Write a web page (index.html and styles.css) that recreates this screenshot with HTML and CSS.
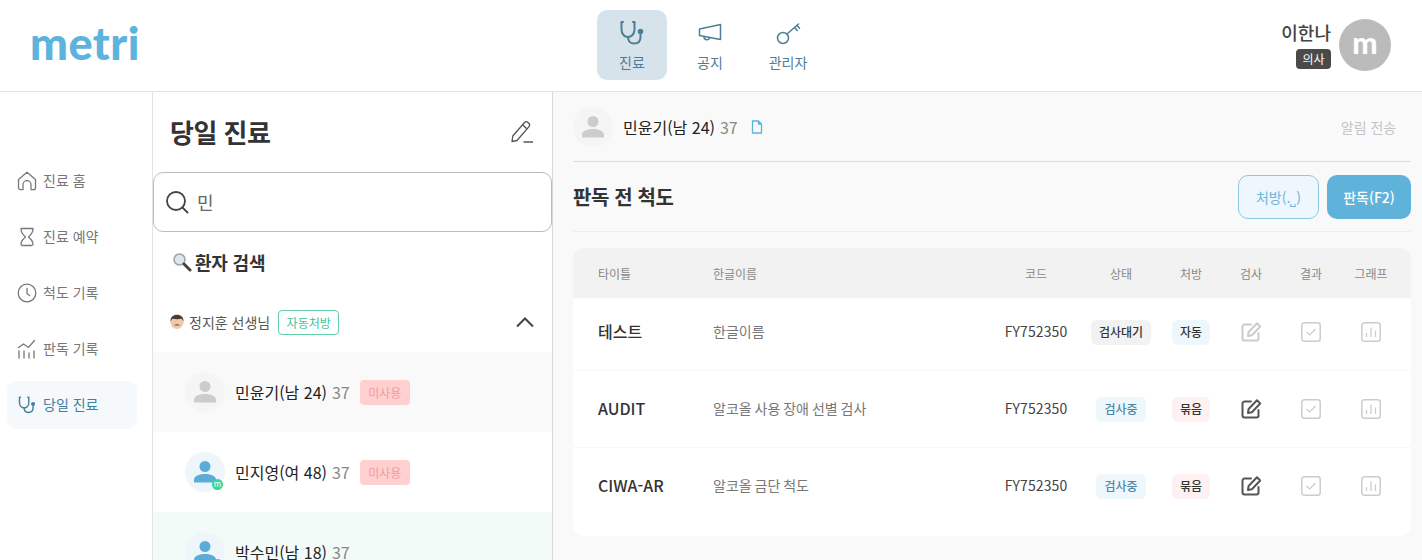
FILE: index.html
```html
<!DOCTYPE html>
<html lang="ko">
<head>
  <meta charset="UTF-8" />
  <meta name="viewport" content="width=device-width, initial-scale=1.0" />
  <title>metri</title>
  <link rel="stylesheet" href="styles.css">
</head>
<body>
  <svg class="defs" width="0" height="0" aria-hidden="true">
    <symbol id="i-steth" viewBox="0 0 28 28">
      <path d="M5 3H3.500v7.500c0 4.600 3 7.500 6.500 7.500s6.500-2.900 6.500-7.500V3H15" fill="none" stroke="currentColor" stroke-width="2" stroke-linecap="round" stroke-linejoin="round"/>
      <path d="M10 18c0 4 2.500 6.500 6 6.500 4 0 6.500-2.500 6.500-6.500v-2.500" fill="none" stroke="currentColor" stroke-width="2" stroke-linecap="round"/>
      <circle cx="22.500" cy="12.500" r="2.800" fill="currentColor"/>
    </symbol>
    <symbol id="i-edit" viewBox="0 0 22 22">
      <path d="M11 3.500H4.500a2 2 0 0 0-2 2v12a2 2 0 0 0 2 2h12a2 2 0 0 0 2-2V12" fill="none" stroke="currentColor" stroke-width="2" stroke-linecap="round"/>
      <path d="M8 15l.6-4L17 2.200l3.200 3.300-8.300 8.800z" fill="none" stroke="currentColor" stroke-width="2" stroke-linejoin="round"/>
    </symbol>
    <symbol id="i-check" viewBox="0 0 22 22">
      <rect x="1.800" y="1.800" width="18.400" height="18.400" rx="2.500" fill="none" stroke="currentColor" stroke-width="1.500"/>
      <path d="M6.500 11l3.200 3 5.800-6" fill="none" stroke="currentColor" stroke-width="1.200"/>
    </symbol>
    <symbol id="i-graph" viewBox="0 0 22 22">
      <rect x="1.800" y="1.800" width="18.400" height="18.400" rx="2.500" fill="none" stroke="currentColor" stroke-width="1.500"/>
      <path d="M6.500 16v-4M11 16V6.500M15.500 16V9.500" fill="none" stroke="currentColor" stroke-width="1.300"/>
    </symbol>
    <symbol id="i-person" viewBox="0 0 24 24">
      <circle cx="12" cy="6.500" r="5.500" fill="currentColor"/>
      <path d="M1 22.500v-2.500c0-3.500 4-6 11-6s11 2.500 11 6v2.500z" fill="currentColor"/>
    </symbol>
  </svg>

  <header class="topbar">
    <div class="logo">metri</div>
    <nav class="topnav">
      <a class="topnav-item active">
        <svg class="topnav-icon" width="28" height="28"><use href="#i-steth"/></svg>
        <span>진료</span>
      </a>
      <a class="topnav-item">
        <svg class="topnav-icon" width="28" height="28" viewBox="0 0 28 28" fill="none" stroke="currentColor" stroke-width="1.500" stroke-linejoin="round">
          <path d="M24.500 5.500v15L3.500 16.500v-6.500z"/>
          <path d="M8 17.500a3 3 0 0 0 5.800 1.300"/>
        </svg>
        <span>공지</span>
      </a>
      <a class="topnav-item">
        <svg class="topnav-icon" width="28" height="28" viewBox="0 0 28 28" fill="none" stroke="currentColor" stroke-width="1.500" stroke-linecap="round">
          <circle cx="9" cy="19" r="5.500"/>
          <path d="M13 15L24.500 5M20.500 8.500l2.800 3M23 6.500l2.500 2.800"/>
        </svg>
        <span>관리자</span>
      </a>
    </nav>
    <div class="user">
      <div class="user-text">
        <div class="user-name">이한나</div>
        <div class="user-role">의사</div>
      </div>
      <div class="user-avatar">m</div>
    </div>
  </header>

  <div class="page">
    <aside class="sidebar">
      <a class="side-item">
        <svg width="20" height="20" viewBox="0 0 20 20" fill="none" stroke="currentColor" stroke-width="1.300" stroke-linejoin="round">
          <path d="M1.500 8.500L10 1.300l8.500 7.200v8.200a2 2 0 0 1-2 2H14v-5a4 4 0 0 0-8 0v5H3.500a2 2 0 0 1-2-2z"/>
        </svg>
        <span>진료 홈</span>
      </a>
      <a class="side-item">
        <svg width="20" height="20" viewBox="0 0 20 20" fill="none" stroke="currentColor" stroke-width="1.300" stroke-linejoin="round">
          <path d="M4 1.500h12c0 3-1.500 6-4.500 8.500 3 2.500 4.500 5 4.500 7a1.500 1.500 0 0 1-1.500 1.500h-9A1.500 1.500 0 0 1 4 17c0-2 1.500-4.500 4.500-7C5.500 7.500 4 4.500 4 1.500z"/>
        </svg>
        <span>진료 예약</span>
      </a>
      <a class="side-item">
        <svg width="20" height="20" viewBox="0 0 20 20" fill="none" stroke="currentColor" stroke-width="1.300" stroke-linecap="round">
          <circle cx="10" cy="10" r="8.800"/>
          <path d="M10 5.500v5l2.500 2"/>
        </svg>
        <span>척도 기록</span>
      </a>
      <a class="side-item">
        <svg width="20" height="20" viewBox="0 0 20 20" fill="none" stroke="currentColor" stroke-width="1.300" stroke-linecap="round">
          <path d="M2 19v-7M7 19v-7M12 19v-5M17 19v-7"/>
          <path d="M1.500 8.500L6.500 5l5 3.500 6-7"/>
        </svg>
        <span>판독 기록</span>
      </a>
      <a class="side-item active">
        <svg width="20" height="20"><use href="#i-steth"/></svg>
        <span>당일 진료</span>
      </a>
    </aside>

    <section class="panel">
      <div class="panel-head">
        <h2 class="panel-title">당일 진료</h2>
        <svg width="24" height="24" viewBox="0 0 24 24" fill="none" stroke="#555" stroke-width="1.300" stroke-linejoin="round">
          <path d="M2 21.500l.8-5.500L14.500 2.500a2.500 2.500 0 0 1 3.500 0l.8.800a2.500 2.500 0 0 1 0 3.500L7 20.500z"/>
          <path d="M12.500 4.800l4.500 4.200M13.500 22h9.500"/>
        </svg>
      </div>
      <div class="search-box">
        <svg width="24" height="24" viewBox="0 0 24 24" fill="none" stroke="#444" stroke-width="1.800" stroke-linecap="round">
          <circle cx="11" cy="11" r="9"/>
          <path d="M17.500 17.500l5 5"/>
        </svg>
        <span class="search-text">민</span>
      </div>
      <div class="search-title">
        <svg width="20" height="20" viewBox="0 0 20 20">
          <circle cx="7.500" cy="7.500" r="5.500" fill="#dfe6ea" stroke="#9aa4aa" stroke-width="1.500"/>
          <path d="M12 12l6 6" stroke="#444" stroke-width="3" stroke-linecap="round"/>
        </svg>
        <span>환자 검색</span>
      </div>
      <div class="group-head">
        <svg width="16" height="16" viewBox="0 0 16 16">
          <circle cx="8" cy="8.500" r="6.500" fill="#f2c9a8"/>
          <path d="M1.500 8C1 3 4.500 .8 8 .8S15 3 14.500 8c-.5-2-1.500-3-2.500-3.200-2 .5-6 .5-8 0C3 5 2 6 1.500 8z" fill="#4a3a32"/>
          <path d="M5 11c1.500-1 4.500-1 6 0-1 .8-5 .8-6 0z" fill="#6a5040"/>
        </svg>
        <span class="group-name">정지훈 선생님</span>
        <span class="group-badge">자동처방</span>
        <svg class="chevron" width="20" height="12" viewBox="0 0 20 12" fill="none" stroke="#444" stroke-width="2">
          <path d="M2 10.500l8-8 8 8"/>
        </svg>
      </div>
      <div class="patient selected">
        <div class="patient-avatar off"><svg width="24" height="24"><use href="#i-person"/></svg></div>
        <span class="patient-name">민윤기(남 24)</span>
        <span class="patient-num">37</span>
        <span class="unused">미사용</span>
      </div>
      <div class="patient">
        <div class="patient-avatar"><svg width="24" height="24"><use href="#i-person"/></svg><i class="online">m</i></div>
        <span class="patient-name">민지영(여 48)</span>
        <span class="patient-num">37</span>
        <span class="unused">미사용</span>
      </div>
      <div class="patient done">
        <div class="patient-avatar"><svg width="24" height="24"><use href="#i-person"/></svg><i class="online">m</i></div>
        <span class="patient-name">박수민(남 18)</span>
        <span class="patient-num">37</span>
      </div>
    </section>

    <main class="main">
      <div class="main-top">
        <div class="patient-avatar off"><svg width="24" height="24"><use href="#i-person"/></svg></div>
        <span class="patient-name">민윤기(남 24)</span>
        <span class="patient-num">37</span>
        <svg class="doc-icon" width="14" height="14" viewBox="0 0 14 14" fill="none" stroke="#5cb3dc" stroke-width="1.300" stroke-linejoin="round">
          <path d="M2.500 1h6l3 3v9h-9zM8.500 1v3h3"/>
        </svg>
        <button type="button" class="notify">알림 전송</button>
      </div>
      <div class="main-head">
        <h3 class="main-title">판독 전 척도</h3>
        <div class="main-actions">
          <button type="button" class="btn btn-line">처방(.⎵)</button>
          <button type="button" class="btn btn-fill">판독(F2)</button>
        </div>
      </div>

      <div class="table">
        <div class="row row-head">
          <div>타이틀</div>
          <div>한글이름</div>
          <div class="center">코드</div>
          <div class="center">상태</div>
          <div class="center">처방</div>
          <div class="center">검사</div>
          <div class="center">결과</div>
          <div class="center">그래프</div>
        </div>
        <div class="row first">
          <div class="cell-title">테스트</div>
          <div class="cell-name">한글이름</div>
          <div class="center cell-code">FY752350</div>
          <div class="center"><span class="tag tag-wait">검사대기</span></div>
          <div class="center"><span class="tag tag-auto">자동</span></div>
          <div class="center light"><svg width="22" height="22"><use href="#i-edit"/></svg></div>
          <div class="center light"><svg width="22" height="22"><use href="#i-check"/></svg></div>
          <div class="center light"><svg width="22" height="22"><use href="#i-graph"/></svg></div>
        </div>
        <div class="row">
          <div class="cell-title">AUDIT</div>
          <div class="cell-name">알코올 사용 장애 선별 검사</div>
          <div class="center cell-code">FY752350</div>
          <div class="center"><span class="tag tag-ing">검사중</span></div>
          <div class="center"><span class="tag tag-bundle">묶음</span></div>
          <div class="center dark"><svg width="22" height="22"><use href="#i-edit"/></svg></div>
          <div class="center light"><svg width="22" height="22"><use href="#i-check"/></svg></div>
          <div class="center light"><svg width="22" height="22"><use href="#i-graph"/></svg></div>
        </div>
        <div class="row last">
          <div class="cell-title">CIWA-AR</div>
          <div class="cell-name">알코올 금단 척도</div>
          <div class="center cell-code">FY752350</div>
          <div class="center"><span class="tag tag-ing">검사중</span></div>
          <div class="center"><span class="tag tag-bundle">묶음</span></div>
          <div class="center dark"><svg width="22" height="22"><use href="#i-edit"/></svg></div>
          <div class="center light"><svg width="22" height="22"><use href="#i-check"/></svg></div>
          <div class="center light"><svg width="22" height="22"><use href="#i-graph"/></svg></div>
        </div>
      </div>
    </main>
  </div>
</body>
</html>
```

FILE: styles.css
```css
* {
  box-sizing: border-box;
}

html, body {
  height: 100%;
}

body {
  margin: 0;
  overflow: hidden;
  display: flex;
  flex-direction: column;
  font-family: "Noto Sans CJK KR", "Noto Sans", sans-serif;
  color: #333;
  background: #fff;
}

.defs {
  position: absolute;
}

h2, h3 {
  margin: 0;
}

/* top bar */
.topbar {
  flex: none;
  height: 92px;
  padding: 0 31px 1px 29px;
  display: grid;
  grid-template-columns: 1fr auto 1fr;
  align-items: center;
  border-bottom: 1px solid #e4e4e4;
}

.logo {
  font-family: Lato, sans-serif;
  font-weight: 900;
  font-size: 45px;
  line-height: 1;
  letter-spacing: 0.5px;
  color: #5cb3dc;
  margin: -4px 0 0 1px;
}

.topnav {
  display: flex;
  gap: 8px;
}

.topnav-item {
  width: 70px;
  height: 70px;
  border-radius: 10px;
  display: flex;
  flex-direction: column;
  align-items: center;
  padding-top: 9px;
  font-size: 14px;
  line-height: 20px;
  color: #4f7d96;
}

.topnav-item.active {
  background: #d7e3ea;
}

.topnav-icon {
  margin-bottom: 5px;
}

.user {
  display: flex;
  justify-content: flex-end;
  align-items: center;
  gap: 8px;
}

.user-text {
  display: flex;
  flex-direction: column;
  align-items: flex-end;
  gap: 4px;
  margin-bottom: 2px;
}

.user-name {
  font-size: 18px;
  font-weight: 500;
  line-height: 26px;
  color: #444;
}

.user-role {
  width: 35px;
  height: 20px;
  border-radius: 4px;
  background: #4a4a4a;
  color: #fff;
  font-size: 12px;
  line-height: 20px;
  text-align: center;
}

.user-avatar {
  width: 52px;
  height: 52px;
  border-radius: 50%;
  background: #bbb;
  color: #fff;
  font-family: Lato, sans-serif;
  font-weight: 900;
  font-size: 30px;
  line-height: 46px;
  text-align: center;
}

/* page columns */
.page {
  flex: 1;
  min-height: 0;
  display: flex;
}

.sidebar {
  flex: none;
  width: 153px;
  padding: 65px 15px 0 7px;
  border-right: 1px solid #e4e4e4;
  display: flex;
  flex-direction: column;
  gap: 8px;
}

.side-item {
  height: 48px;
  padding: 0 10px;
  border-radius: 10px;
  display: flex;
  align-items: center;
  gap: 6px;
  font-size: 14px;
  color: #777;
}

.side-item span {
  padding-bottom: 2px;
}

.side-item.active {
  background: #f5f9fb;
  color: #3f7f9f;
}

/* patient list */
.panel {
  flex: none;
  width: 400px;
  border-right: 1px solid #d8d8d8;
  overflow: hidden;
}

.panel-head {
  height: 80px;
  padding: 0 18px 0 17px;
  display: flex;
  justify-content: space-between;
  align-items: center;
}

.panel-title {
  font-size: 26px;
  font-weight: 700;
  line-height: 36px;
  letter-spacing: -0.5px;
}

.search-box {
  height: 60px;
  width: 399px;
  padding: 0 11px;
  border: 1px solid #bbb;
  border-radius: 10px;
  display: flex;
  align-items: center;
  gap: 8px;
}

.search-text {
  font-size: 18px;
  color: #666;
}

.search-title {
  height: 60px;
  padding: 0 0 0 19px;
  display: flex;
  align-items: center;
  gap: 3px;
  font-size: 18px;
  font-weight: 700;
  letter-spacing: -0.2px;
}

.group-head {
  height: 60px;
  padding: 0 17px 0 16px;
  display: flex;
  align-items: center;
  gap: 4px;
}

.group-name {
  font-size: 14px;
  color: #555;
}

.group-badge {
  margin-left: 4px;
  width: 61px;
  height: 25px;
  border: 1px solid #5fd0a8;
  border-radius: 4px;
  font-size: 12px;
  line-height: 23px;
  text-align: center;
  color: #3cc795;
}

.chevron {
  margin-left: auto;
}

.patient {
  height: 80px;
  padding-left: 32px;
  display: flex;
  align-items: center;
}

.patient.selected {
  background: #f9f9f9;
}

.patient.done {
  background: #f3fbf8;
}

.patient-avatar {
  position: relative;
  flex: none;
  width: 40px;
  height: 40px;
  margin-right: 10px;
  border-radius: 50%;
  background: #eef6fb;
  color: #5cacd8;
  display: flex;
  justify-content: center;
  align-items: center;
}

.patient-avatar.off {
  background: #f5f5f5;
  color: #ccc;
}

.online {
  position: absolute;
  right: 2px;
  bottom: 2px;
  width: 11px;
  height: 11px;
  border-radius: 50%;
  background: #3ed39a;
  color: #fff;
  font-size: 8px;
  font-style: normal;
  line-height: 9px;
  text-align: center;
}

.patient-name {
  font-size: 16px;
  font-weight: 400;
  color: #222;
}

.patient-num {
  margin-left: 5px;
  font-size: 16px;
  color: #888;
}

.unused {
  margin-left: 10px;
  width: 50px;
  height: 25px;
  border-radius: 4px;
  background: #ffd0d0;
  color: #f59a9a;
  font-size: 12px;
  line-height: 25px;
  text-align: center;
}

/* main */
.main {
  flex: 1;
  min-width: 0;
  padding: 0 11px 0 20px;
  background: #f9f9f9;
}

.main-top {
  height: 70px;
  display: flex;
  align-items: center;
  border-bottom: 1px solid #ddd;
}

.doc-icon {
  margin-left: 12px;
}

.notify {
  margin-left: auto;
  width: 85px;
  height: 40px;
  border: none;
  border-radius: 6px;
  background: #fafafa;
  color: #c4c4c4;
  font-family: inherit;
  font-size: 14px;
}

.main-head {
  height: 70px;
  display: flex;
  justify-content: space-between;
  align-items: center;
  border-bottom: 1px solid #eee;
}

.main-title {
  font-size: 20px;
  font-weight: 700;
  letter-spacing: -0.4px;
}

.main-actions {
  display: flex;
  gap: 8px;
}

.btn {
  height: 44px;
  border-radius: 10px;
  font-family: inherit;
  font-size: 14px;
}

.btn-line {
  width: 81px;
  border: 1px solid #8cc8e6;
  background: #edf7fd;
  color: #6cb4d8;
}

.btn-fill {
  width: 84px;
  border: none;
  background: #5fb2da;
  color: #fff;
  font-weight: 500;
}

.table {
  margin-top: 16px;
  background: #fff;
  border-radius: 10px;
  overflow: hidden;
}

.row {
  display: grid;
  grid-template-columns: 115px 278px 90px 80px 60px 60px 60px 60px;
  align-items: center;
  height: 77px;
  padding: 0 10px 0 25px;
  border-bottom: 1px solid #f7f7f7;
  font-size: 14px;
}

.row-head {
  height: 50px;
  background: #f2f2f2;
  border-bottom: none;
  font-size: 12px;
  color: #888;
}

.row.first {
  height: 73px;
  padding-bottom: 4px;
}

.row.last {
  height: 88px;
  padding-bottom: 12px;
  border-bottom: none;
}

.center {
  display: flex;
  justify-content: center;
  align-items: center;
}

.light {
  color: #ccc;
}

.dark {
  color: #555;
}

.cell-title {
  padding-bottom: 2px;
  font-size: 16px;
  font-weight: 500;
}

.cell-name {
  padding-bottom: 2px;
  word-spacing: -1px;
  color: #777;
}

.cell-code {
  padding-bottom: 2px;
  letter-spacing: 0.1px;
  color: #444;
}

.tag {
  height: 25px;
  padding: 0 8px;
  border-radius: 6px;
  font-size: 12px;
  font-weight: 500;
  line-height: 23px;
}

.tag-wait {
  background: #f2f2f2;
  color: #333;
}

.tag-auto {
  background: #eef7fc;
  color: #333;
}

.tag-ing {
  background: #eef7fc;
  color: #4f86a8;
}

.tag-bundle {
  background: #fdf1f1;
  color: #333;
}
```
